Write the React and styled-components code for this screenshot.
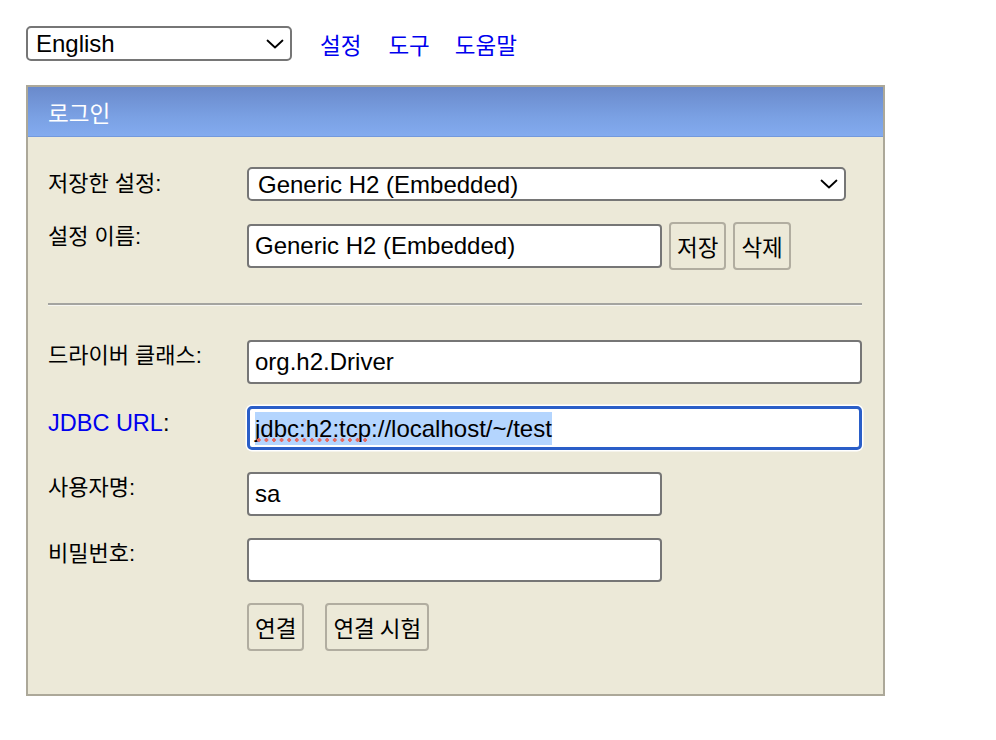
import React from "react";
import styled, { createGlobalStyle } from "styled-components";

const GlobalStyle = createGlobalStyle`
  html, body {
    margin: 0;
    padding: 0;
    background: #ffffff;
  }
  body {
    font-family: "Liberation Sans", "Noto Sans CJK KR", sans-serif;
    color: #000;
  }
`;

const Page = styled.div`
  padding: 26px 0 0 26px;
`;

const TopBar = styled.div`
  display: flex;
  align-items: center;
  height: 35px;
`;

const SelectWrap = styled.div`
  position: relative;
  width: ${(p) => p.$width}px;
  height: ${(p) => p.$height}px;
`;

const SelectBox = styled.select`
  appearance: none;
  -webkit-appearance: none;
  box-sizing: border-box;
  width: 100%;
  height: 100%;
  margin: 0;
  border: 2px solid #767676;
  border-radius: 5px;
  background: #ffffff;
  padding: 0 30px 0 ${(p) => p.$padLeft}px;
  font-family: "Liberation Sans", "Noto Sans CJK KR", sans-serif;
  font-size: 24px;
  color: #000;
  outline: none;
`;

const Chevron = styled.svg`
  position: absolute;
  right: ${(p) => p.$right}px;
  top: 50%;
  transform: translateY(-50%);
  pointer-events: none;
`;

const NavLink = styled.a`
  font-family: "Noto Sans CJK KR", "Liberation Sans", sans-serif;
  font-size: 22.5px;
  color: #0000ee;
  text-decoration: none;
  margin-left: ${(p) => p.$gap}px;
  line-height: 30px;
`;

const Panel = styled.div`
  margin-top: 24px;
  width: 859px;
  box-sizing: border-box;
  border: 2px solid #aca899;
  background: #ece9d8;
`;

const PanelHeader = styled.div`
  height: 49px;
  border-bottom: 1px solid #7399dc;
  background: linear-gradient(to bottom, #6a8acb 0%, #7aa0e3 60%, #83abef 100%);
  display: flex;
  align-items: center;
  padding-left: 20px;
  font-family: "Noto Sans CJK KR", "Liberation Sans", sans-serif;
  font-size: 22.5px;
  color: #ffffff;
`;

const PanelBody = styled.div`
  padding: 30px 21px 43px 20px;
`;

const FormGrid = styled.div`
  display: grid;
  grid-template-columns: 199px 615px;
  row-gap: ${(p) => p.$gap}px;
  align-items: start;
`;

const Label = styled.div`
  font-family: "Liberation Sans", "Noto Sans CJK KR", sans-serif;
  font-size: ${(p) => (p.$latin ? 23.5 : 22)}px;
  line-height: 28px;
  padding-top: ${(p) => p.$top ?? 2}px;
  white-space: nowrap;
`;

const LabelLink = styled.a`
  color: #0000ee;
  text-decoration: none;
`;

const FieldRow = styled.div`
  display: flex;
  align-items: center;
  gap: 7px;
  height: ${(p) => p.$height}px;
`;

const TextInput = styled.input`
  box-sizing: border-box;
  width: ${(p) => p.$width}px;
  height: 44px;
  margin: 0;
  border: 2px solid #767676;
  border-radius: 4px;
  background: #ffffff;
  padding: 0 6px;
  font-family: "Liberation Sans", "Noto Sans CJK KR", sans-serif;
  font-size: 24px;
  color: #000;
  outline: none;
`;

const FocusedField = styled.div`
  box-sizing: border-box;
  width: 615px;
  height: 44px;
  border: 3px solid #2a5ec8;
  border-radius: 5px;
  background: #ffffff;
  box-shadow: 0 0 0 1.5px #ffffff;
  padding: 0 5px;
  display: flex;
  align-items: center;
  font-size: 24px;
  white-space: nowrap;
  overflow: hidden;
`;

const Selected = styled.span`
  background: #b4d5fe;
  line-height: 33px;
  display: inline-block;
`;

const Misspelled = styled.span`
  position: relative;
  &::after {
    content: "";
    position: absolute;
    left: 0;
    right: 0;
    bottom: 0;
    height: 4px;
    background-image: radial-gradient(circle, #e56a62 1.6px, transparent 2px);
    background-size: 7.6px 4px;
    background-repeat: repeat-x;
    background-position: 0 0;
  }
`;

const Button = styled.button`
  box-sizing: border-box;
  height: 48px;
  margin: 0;
  padding: 0 6px;
  border: 2px solid #b1ada0;
  border-radius: 4px;
  background: #ece9d8;
  font-family: "Noto Sans CJK KR", "Liberation Sans", sans-serif;
  font-size: 22.5px;
  color: #000;
`;

const ButtonRow = styled.div`
  display: flex;
  gap: ${(p) => p.$gap}px;
  margin-top: -1px;
`;

const Separator = styled.div`
  margin: 33px 0 34px;
  height: 0;
  border-top: 2px solid #a4a4a0;
  border-bottom: 1px solid #f6f5f0;
`;

const ChevronIcon = ({ right }) => (
  <Chevron $right={right} width="18" height="10" viewBox="0 0 18 10">
    <path d="M1.5 1.5 L9 8.5 L16.5 1.5" fill="none" stroke="#000" strokeWidth="1.8" strokeLinecap="round" strokeLinejoin="round" />
  </Chevron>
);

export default function App() {
  return (
    <>
      <GlobalStyle />
      <Page>
        <TopBar>
          <SelectWrap $width={266} $height={35}>
            <SelectBox $padLeft={8} defaultValue="en">
              <option value="en">English</option>
            </SelectBox>
            <ChevronIcon right={8} />
          </SelectWrap>
          <NavLink href="#" $gap={28}>설정</NavLink>
          <NavLink href="#" $gap={27}>도구</NavLink>
          <NavLink href="#" $gap={25}>도움말</NavLink>
        </TopBar>

        <Panel>
          <PanelHeader>로그인</PanelHeader>
          <PanelBody>
            <FormGrid $gap={21}>
              <Label $top={3}>저장한 설정:</Label>
              <SelectWrap $width={599} $height={34}>
                <SelectBox $padLeft={9} defaultValue="g">
                  <option value="g">Generic H2 (Embedded)</option>
                </SelectBox>
                <ChevronIcon right={8} />
              </SelectWrap>

              <Label $top={1}>설정 이름:</Label>
              <FieldRow $height={48}>
                <TextInput $width={415} defaultValue="Generic H2 (Embedded)" />
                <Button>저장</Button>
                <Button>삭제</Button>
              </FieldRow>
            </FormGrid>

            <Separator />

            <FormGrid $gap={22}>
              <Label>드라이버 클래스:</Label>
              <TextInput $width={615} defaultValue="org.h2.Driver" />

              <Label $latin $top={3}>
                <LabelLink href="#">JDBC URL</LabelLink>:
              </Label>
              <FocusedField>
                <Selected>
                  <Misspelled>jdbc:h2:tcp</Misspelled>://localhost/~/test
                </Selected>
              </FocusedField>

              <Label>사용자명:</Label>
              <TextInput $width={415} defaultValue="sa" />

              <Label>비밀번호:</Label>
              <TextInput $width={415} type="password" defaultValue="" />

              <div />
              <ButtonRow $gap={21}>
                <Button>연결</Button>
                <Button>연결 시험</Button>
              </ButtonRow>
            </FormGrid>
          </PanelBody>
        </Panel>
      </Page>
    </>
  );
}
